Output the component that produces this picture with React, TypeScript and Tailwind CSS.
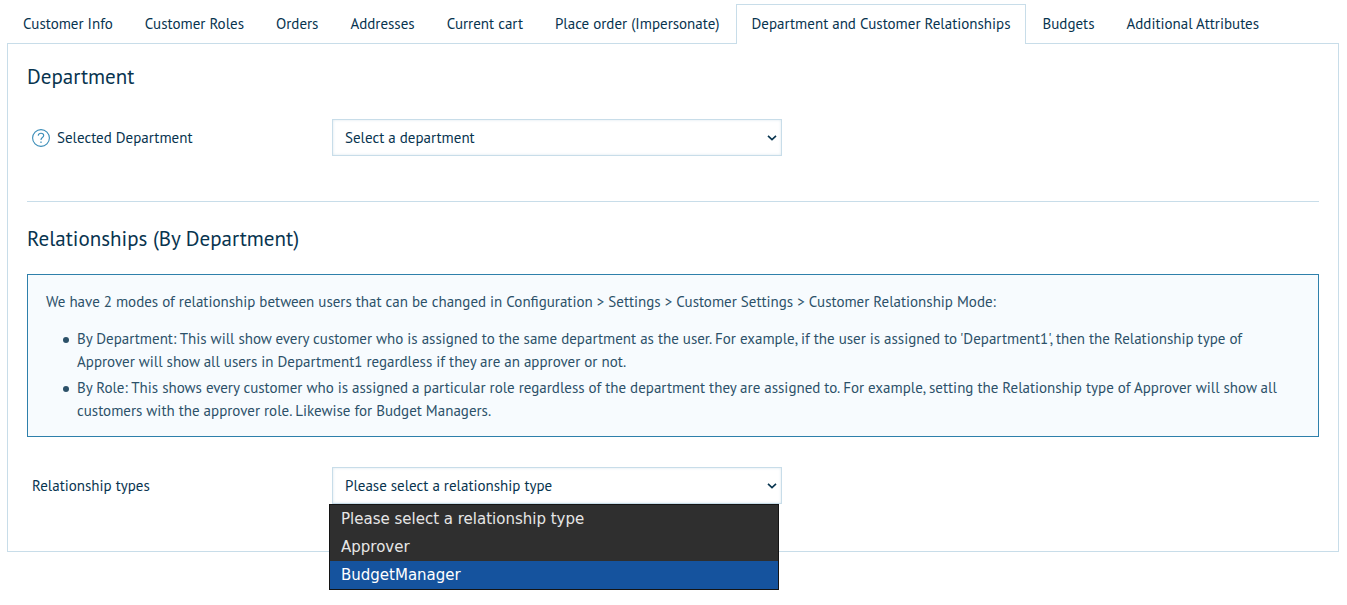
import React, { useState } from 'react';
import { clsx } from 'clsx';

const tabs = [
  'Customer Info',
  'Customer Roles',
  'Orders',
  'Addresses',
  'Current cart',
  'Place order (Impersonate)',
  'Department and Customer Relationships',
  'Budgets',
  'Additional Attributes',
];

const modes = [
  "By Department: This will show every customer who is assigned to the same department as the user. For example, if the user is assigned to 'Department1', then the Relationship type of Approver will show all users in Department1 regardless if they are an approver or not.",
  'By Role: This shows every customer who is assigned a particular role regardless of the department they are assigned to. For example, setting the Relationship type of Approver will show all customers with the approver role. Likewise for Budget Managers.',
];

const relationshipTypes = ['Please select a relationship type', 'Approver', 'BudgetManager'];

const HelpIcon: React.FC = () => (
  <svg width="18" height="18" viewBox="0 0 18 18" fill="none" stroke="#3b8db8" aria-hidden="true">
    <circle cx="9" cy="9" r="8.4" strokeWidth="1.1" />
    <path d="M6.2 6.6c.2-1.5 1.2-2.4 2.8-2.4s2.7.9 2.7 2.3c0 2-2.7 2.1-2.7 4.2v.4" strokeWidth="1.1" />
    <path d="M9 12.6v1.4" strokeWidth="1.2" />
  </svg>
);

interface SelectProps {
  id: string;
  options: string[];
  value: string;
  onChange: (value: string) => void;
}

const Select: React.FC<SelectProps> = ({ id, options, value, onChange }) => (
  <div className="relative">
    <select
      id={id}
      value={value}
      onChange={(e) => onChange(e.target.value)}
      className="block h-[37px] w-full appearance-none border border-[#c8dde9] bg-white px-3 pt-[2px] text-[15px] text-[#08344f] shadow-[inset_0_0_3px_#d9e6ee]"
    >
      {options.map((option) => (
        <option key={option}>{option}</option>
      ))}
    </select>
    <svg
      className="pointer-events-none absolute top-4 right-[5px]"
      width="10"
      height="6"
      viewBox="0 0 10 6"
      fill="none"
      stroke="#08344f"
      strokeWidth="1.6"
      aria-hidden="true"
    >
      <path d="M1 .9 5 4.7 9 .9" />
    </svg>
  </div>
);

const App: React.FC = () => {
  const [activeTab, setActiveTab] = useState('Department and Customer Relationships');
  const [department, setDepartment] = useState('Select a department');
  const [type, setType] = useState(relationshipTypes[0]);
  const [highlighted, setHighlighted] = useState('BudgetManager');

  return (
    <div className="min-h-screen pt-1 pr-2 pb-3 pl-[7px] font-['PT_Sans',Lato,sans-serif] text-[15px] text-[#08344f]">
      {/* Tabs */}
      <div role="tablist" className="flex">
        {tabs.map((tab) => (
          <button
            key={tab}
            type="button"
            role="tab"
            aria-selected={tab === activeTab}
            onClick={() => setActiveTab(tab)}
            className={clsx(
              'relative -mb-px h-10 border border-b-0 px-[15px] whitespace-nowrap',
              tab === activeTab ? 'border-[#c8dde9] bg-white' : 'border-transparent'
            )}
          >
            {tab}
          </button>
        ))}
      </div>

      <main className="border border-[#c8dde9] px-[19px] pb-[47px]">
        {/* Department */}
        <section className="border-b border-[#c8dde9] pb-[45px]">
          <h2 className="pt-[18px] text-[21px] leading-[30px]">Department</h2>
          <div className="mt-[27px] flex items-center pl-[5px]">
            <label htmlFor="department" className="flex w-[300px] items-center gap-[7px] leading-6">
              <HelpIcon />
              Selected Department
            </label>
            <div className="w-[450px]">
              <Select
                id="department"
                options={['Select a department']}
                value={department}
                onChange={setDepartment}
              />
            </div>
          </div>
        </section>

        {/* Relationships */}
        <section>
          <h2 className="pt-[22px] text-[21px] leading-[30px]">Relationships (By Department)</h2>
          <div className="mt-5 border border-[#2e80ab] bg-[#f7fbfe] px-[18px] pt-[15px] pb-[14px] leading-[23px] text-[#2c5169]">
            <p>
              We have 2 modes of relationship between users that can be changed in Configuration &gt; Settings &gt;
              Customer Settings &gt; Customer Relationship Mode:
            </p>
            <ul className="mt-[14px] space-y-[3px] pl-[17px]">
              {modes.map((mode) => (
                <li key={mode} className="flex gap-2">
                  <span className="mt-[10px] size-[6px] shrink-0 rounded-full bg-[#2c5169]" />
                  <span>{mode}</span>
                </li>
              ))}
            </ul>
          </div>

          <div className="mt-[30px] flex items-center pl-[5px]">
            <label htmlFor="relationship-type" className="w-[300px] leading-6">
              Relationship types
            </label>
            <div className="relative w-[450px]">
              <Select id="relationship-type" options={relationshipTypes} value={type} onChange={setType} />

              {/* Open option list */}
              <ul
                role="listbox"
                aria-label="Relationship types"
                className="absolute top-full -left-[3px] w-full border border-[#141414] bg-[#2f2f2f] font-['DejaVu_Sans',sans-serif] text-[15px] leading-7 text-[#e6e6e6]"
              >
                {relationshipTypes.map((option) => (
                  <li
                    key={option}
                    role="option"
                    aria-selected={option === highlighted}
                    onMouseEnter={() => setHighlighted(option)}
                    onClick={() => setType(option)}
                    className={clsx('px-[11px]', option === highlighted && 'bg-[#15539e] text-white')}
                  >
                    {option}
                  </li>
                ))}
              </ul>
            </div>
          </div>
        </section>
      </main>
    </div>
  );
};

export default App;
